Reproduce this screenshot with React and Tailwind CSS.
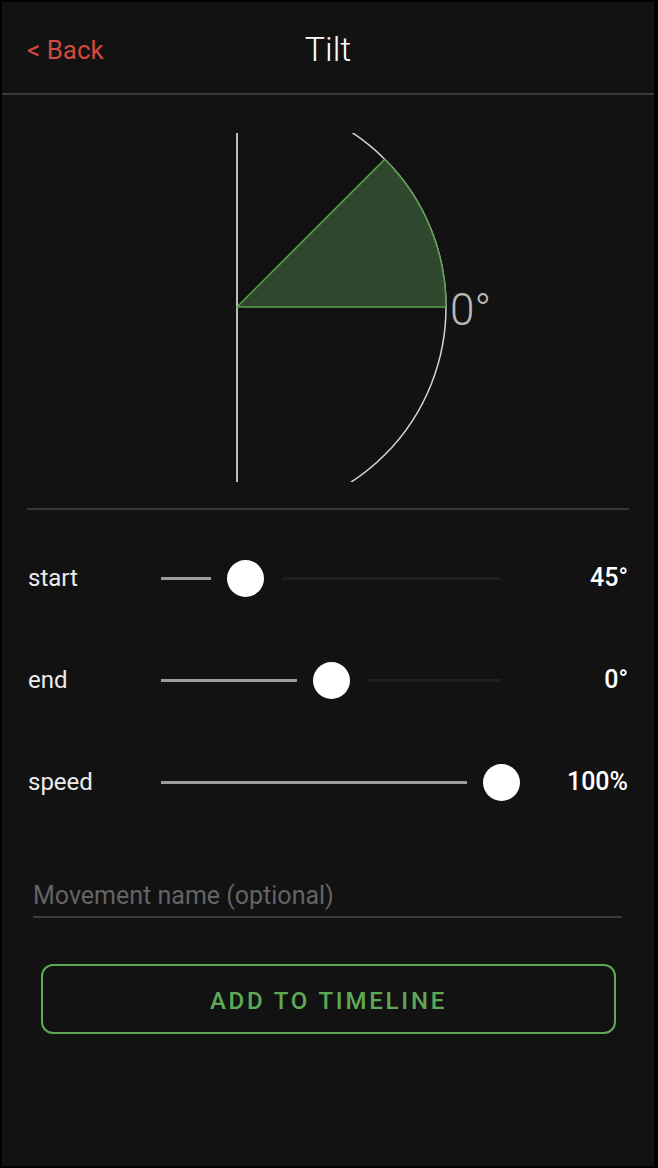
import React from "react";

const rows = [
  { label: "start", value: "45°", pos: 0.2485 },
  { label: "end", value: "0°", pos: 0.5 },
  { label: "speed", value: "100%", pos: 1 },
];

function Slider({ pos }) {
  const width = 340;
  const cx = pos * width;
  return (
    <div className="relative w-[340px] h-[37px] shrink-0">
      {cx - 34 > 0 && (
        <div
          className="absolute top-[17px] left-0 h-[3px] bg-[#9c9c9c]"
          style={{ width: cx - 34 }}
        />
      )}
      {cx + 37 < width && (
        <div
          className="absolute top-[17px] h-[3px] bg-[#1f1f1f]"
          style={{ left: cx + 37, width: width - cx - 37 }}
        />
      )}
      <div
        className="absolute top-0 w-[37px] h-[37px] rounded-full bg-white"
        style={{ left: cx - 18.5 }}
      />
    </div>
  );
}

function TiltDial() {
  // center of the dial sits on the vertical axis
  const cx = 235;
  const cy = 212;
  const r = 209;
  const a = Math.PI / 4;
  const px = cx + r * Math.cos(a);
  const py = cy - r * Math.sin(a);
  return (
    <svg width="652" height="413" className="block">
      <defs>
        <clipPath id="dial">
          <rect x={cx} y="38" width="300" height="349" />
        </clipPath>
      </defs>
      <line x1={cx} y1="38" x2={cx} y2="387" stroke="#bdbdbd" strokeWidth="2" />
      <circle cx={cx} cy={cy} r={r} fill="none" stroke="#d4d4d4" strokeWidth="1.5" clipPath="url(#dial)" />
      <path
        d={`M ${cx} ${cy} L ${cx + r} ${cy} A ${r} ${r} 0 0 0 ${px} ${py} Z`}
        fill="#2e472d"
        stroke="#5e9f55"
        strokeWidth="1.5"
        strokeLinejoin="round"
      />
      <text
        x="448"
        y="230"
        fill="#b9b9b9"
        fontSize="44"
        fontWeight="300"
        fontFamily="Roboto, 'Liberation Sans', sans-serif"
      >
        0°
      </text>
    </svg>
  );
}

export default function App() {
  return (
    <div className="min-h-[1168px] bg-[#121212] border-t-2 border-l-2 border-r-4 border-b-2 border-black font-['Roboto','Liberation_Sans',sans-serif] flex flex-col">
      <div className="h-[93px] border-b-2 border-[#393939] grid grid-cols-[1fr_auto_1fr] items-center">
        <div className="pl-[25px] pt-[5px] text-[26px] text-[#d4483d]">&lt; Back</div>
        <div className="text-[34px] font-light text-white pt-[4px]">Tilt</div>
        <div />
      </div>

      <TiltDial />

      <div className="mx-[25px] border-t-2 border-[#363636]" />

      <div className="pt-[17px]">
        {rows.map((row) => (
          <div key={row.label} className="h-[102px] flex items-center pl-[26px] pr-[26px]">
            <div className="w-[133px] shrink-0 text-[24px] text-[#ececec]">{row.label}</div>
            <Slider pos={row.pos} />
            <div className="flex-1 text-right text-[25px] font-medium text-white">{row.value}</div>
          </div>
        ))}
      </div>

      <div className="mt-[39px] ml-[31px] w-[589px]">
        <input
          placeholder="Movement name (optional)"
          className="w-full h-[46px] pt-[3px] bg-transparent border-b-2 border-[#3b3b3b] text-[25px] text-white placeholder:text-[#646464] outline-none"
        />
      </div>

      <button className="mt-[46px] ml-[39px] w-[575px] h-[70px] pt-[3px] rounded-[12px] border-2 border-[#5ea955] text-[#5ea955] text-[24px] font-medium tracking-[2.8px]">
        ADD TO TIMELINE
      </button>
    </div>
  );
}
